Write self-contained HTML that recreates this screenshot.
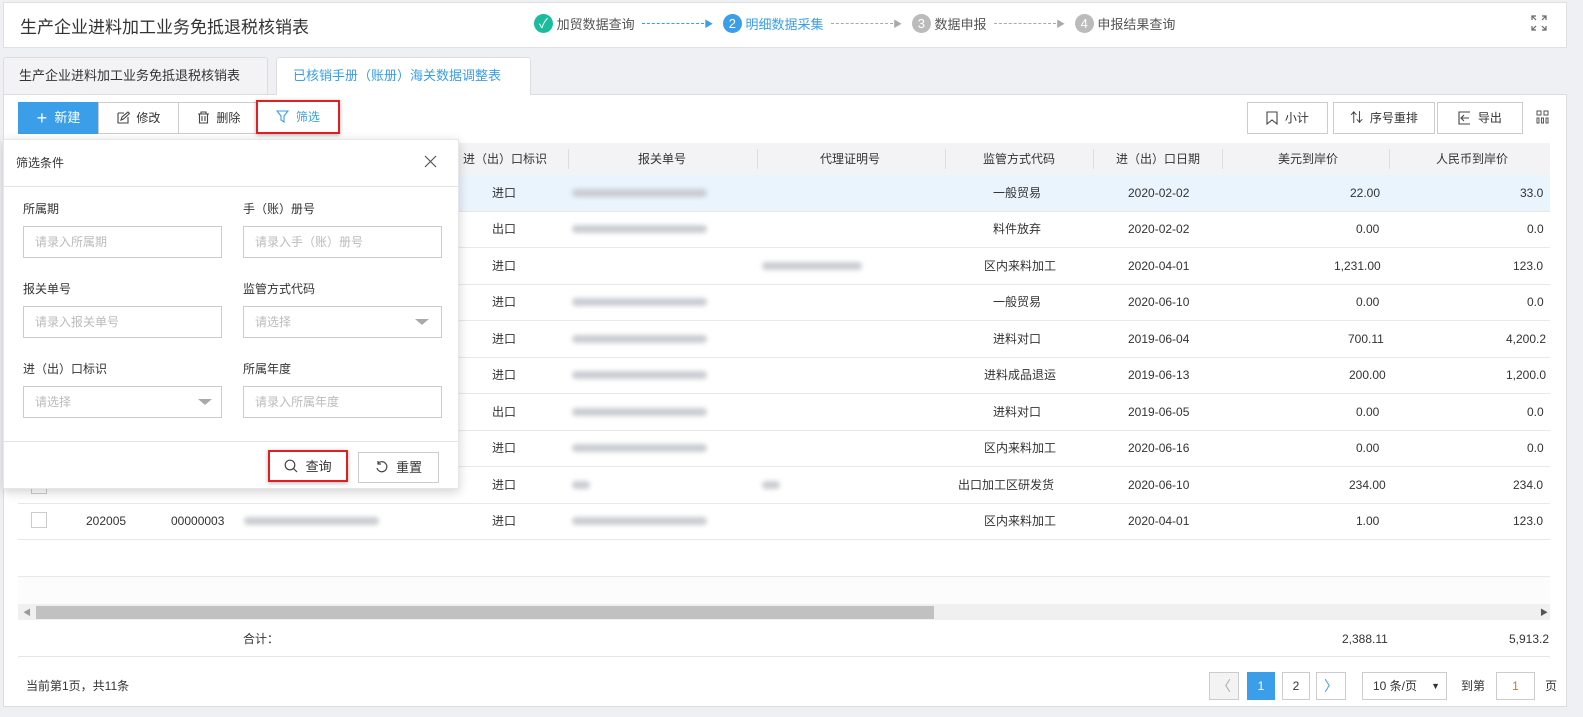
<!DOCTYPE html>
<html><head><meta charset="utf-8"><style>
*{box-sizing:border-box;margin:0;padding:0}
body{width:1583px;height:717px;background:#eef0f4;font-family:"Liberation Sans","Noto Sans CJK SC",sans-serif;font-size:12px;color:#333;position:relative;overflow:hidden}
.a{position:absolute}
.btn{position:absolute;border:1px solid #ccc;background:#fff;height:32px;line-height:30px;text-align:center;font-size:12px;color:#333}
.cell{position:absolute;white-space:nowrap;line-height:16px;height:16px}
.blur{position:absolute;height:8px;background:#c9ccd2;filter:blur(2.5px);border-radius:4px}
.row{position:absolute;left:18px;width:1532px;height:37px;border-bottom:1px solid #e8e8e8}
.inp{position:absolute;width:199px;height:32px;border:1px solid #ccc;color:#bbb;padding-left:11px;line-height:30px;font-size:12px;background:#fff}
.lbl{position:absolute;font-size:12px;color:#333}
.circ{display:inline-block;width:19px;height:19px;border-radius:50%;color:#fff;text-align:center;line-height:19px;font-size:13px;vertical-align:middle}
.tri{position:absolute;width:0;height:0;border-left:7px solid transparent;border-right:7px solid transparent;border-top:6px solid #aaa}
</style></head><body>
<div class="a" style="left:3px;top:2px;width:1564px;height:46px;background:#fff;border:1px solid #e0e0e0"></div>
<div class="a" style="left:20px;top:13px;font-size:17px;color:#333">生产企业进料加工业务免抵退税核销表</div>
<div class="a" style="left:534px;top:14px;font-size:13px;color:#555;white-space:nowrap">
<span class="circ" style="background:#1bbc9b">✓</span> <span style="vertical-align:middle">加贸数据查询</span>
<span style="display:inline-block;width:62px;border-top:1px dashed #3a9ee8;vertical-align:middle;margin-left:4px"></span><span style="color:#3a9ee8;font-size:9px;vertical-align:middle">▶</span>
<span class="circ" style="background:#3a9ee8;margin-left:6px">2</span> <span style="vertical-align:middle;color:#3a9ee8">明细数据采集</span>
<span style="display:inline-block;width:62px;border-top:1px dashed #aaa;vertical-align:middle;margin-left:4px"></span><span style="color:#aaa;font-size:9px;vertical-align:middle">▶</span>
<span class="circ" style="background:#bbb;margin-left:6px">3</span> <span style="vertical-align:middle">数据申报</span>
<span style="display:inline-block;width:62px;border-top:1px dashed #aaa;vertical-align:middle;margin-left:4px"></span><span style="color:#aaa;font-size:9px;vertical-align:middle">▶</span>
<span class="circ" style="background:#bbb;margin-left:6px">4</span> <span style="vertical-align:middle">申报结果查询</span>
</div>
<svg class="a" style="left:1531px;top:15px" width="16" height="16" viewBox="0 0 16 16" fill="none" stroke="#666" stroke-width="1.2"><path d="M1 5V1h4M1 1l4 4M15 5V1h-4M15 1l-4 4M1 11v4h4M1 15l4-4M15 11v4h-4M15 15l-4-4"/></svg>
<div class="a" style="left:3px;top:57px;width:265px;height:37px;background:#f3f3f5;border:1px solid #ddd;border-bottom:none;border-radius:3px 3px 0 0;line-height:36px;padding-left:15px;font-size:13px">生产企业进料加工业务免抵退税核销表</div>
<div class="a" style="left:276px;top:57px;width:255px;height:38px;background:#fff;border:1px solid #ddd;border-bottom:none;border-radius:3px 3px 0 0;line-height:36px;padding-left:16px;font-size:13px;color:#3a9ee8;z-index:2">已核销手册（账册）海关数据调整表</div>
<div class="a" style="left:3px;top:94px;width:1564px;height:613px;background:#fff;border:1px solid #ddd"></div>
<div class="btn" style="left:18px;top:102px;width:81px;background:#3a9ee8;border-color:#3a9ee8;color:#fff;font-size:13px"><span style="font-size:18px;vertical-align:-2px">+</span>&nbsp; 新建</div>
<div class="btn" style="left:98px;top:102px;width:81px"><svg width="13" height="13" viewBox="0 0 13 13" style="vertical-align:-2px" fill="none" stroke="#444" stroke-width="1.1"><path d="M1 2h6M1 2v10h10V6M4 9l1-3 6-5 1.5 1.5-6 5.5z"/></svg>&nbsp; 修改</div>
<div class="btn" style="left:178px;top:102px;width:81px"><svg width="13" height="13" viewBox="0 0 13 13" style="vertical-align:-2px" fill="none" stroke="#444" stroke-width="1.1"><path d="M1 3h11M4 3V1h5v2M2.5 3v9h8V3M5 5v5M8 5v5"/></svg>&nbsp; 删除</div>
<div class="btn" style="left:256px;top:100px;width:84px;height:34px;border:2px solid #e02020;color:#3a9ee8;line-height:30px;box-shadow:0 1px 4px rgba(0,0,0,.3)"><svg width="13" height="13" viewBox="0 0 13 13" style="vertical-align:-2px" fill="none" stroke="#3a9ee8" stroke-width="1.1"><path d="M1 1h11L8 6v6L5 10V6z"/></svg>&nbsp; 筛选</div>
<div class="btn" style="left:1247px;top:102px;width:81px"><svg width="12" height="14" viewBox="0 0 12 14" style="vertical-align:-3px" fill="none" stroke="#444" stroke-width="1.1"><path d="M1 1h10v12L6 9l-5 4z"/></svg>&nbsp; 小计</div>
<div class="btn" style="left:1333px;top:102px;width:102px"><span style="font-size:13px">⇅</span>&nbsp; 序号重排</div>
<div class="btn" style="left:1437px;top:102px;width:86px"><svg width="13" height="14" viewBox="0 0 13 14" style="vertical-align:-3px" fill="none" stroke="#444" stroke-width="1.1"><path d="M12 1H1v12h11M4 7h7M6 4L3 7l3 3"/></svg>&nbsp; 导出</div>
<svg class="a" style="left:1536px;top:110px" width="13" height="14" viewBox="0 0 13 14" fill="none" stroke="#555" stroke-width="1"><path d="M1 1h4v4H1zM8 1h4v4H8zM1 8h2v5H1zM5.5 8h2v5h-2zM10 8h2v5h-2z"/></svg>
<div class="a" style="left:18px;top:143px;width:1532px;height:33px;background:#f3f3f5;border-bottom:1px solid #e3e3e3"></div>
<div class="cell" style="left:463px;top:151px">进（出）口标识</div>
<div class="cell" style="left:638px;top:151px">报关单号</div>
<div class="cell" style="left:820px;top:151px">代理证明号</div>
<div class="cell" style="left:983px;top:151px">监管方式代码</div>
<div class="cell" style="left:1116px;top:151px">进（出）口日期</div>
<div class="cell" style="left:1278px;top:151px">美元到岸价</div>
<div class="cell" style="left:1436px;top:151px">人民币到岸价</div>
<div class="a" style="left:568px;top:149px;height:20px;border-left:1px solid #ddd"></div>
<div class="a" style="left:757px;top:149px;height:20px;border-left:1px solid #ddd"></div>
<div class="a" style="left:945px;top:149px;height:20px;border-left:1px solid #ddd"></div>
<div class="a" style="left:1093px;top:149px;height:20px;border-left:1px solid #ddd"></div>
<div class="a" style="left:1222px;top:149px;height:20px;border-left:1px solid #ddd"></div>
<div class="a" style="left:1389px;top:149px;height:20px;border-left:1px solid #ddd"></div>
<div class="row" style="top:175px;background:#eaf4fd"></div>
<div class="row" style="top:211px"></div><div class="row" style="top:248px"></div><div class="row" style="top:284px"></div><div class="row" style="top:321px"></div><div class="row" style="top:357px"></div><div class="row" style="top:394px"></div><div class="row" style="top:430px"></div><div class="row" style="top:467px"></div><div class="row" style="top:503px"></div><div class="row" style="top:540px"></div>
<div class="a" style="left:18px;top:577px;width:1532px;height:27px;background:#fcfcfc"></div>
<div class="cell" style="left:492px;top:185px">进口</div><div class="blur" style="left:572px;top:189px;width:135px"></div><div class="cell" style="left:993px;top:185px">一般贸易</div><div class="cell" style="left:1128px;top:185px">2020-02-02</div><div class="cell" style="left:1350px;top:185px">22.00</div><div class="cell" style="left:1520px;top:185px">33.0</div>
<div class="cell" style="left:492px;top:221px">出口</div><div class="blur" style="left:572px;top:225px;width:135px"></div><div class="cell" style="left:993px;top:221px">料件放弃</div><div class="cell" style="left:1128px;top:221px">2020-02-02</div><div class="cell" style="left:1356px;top:221px">0.00</div><div class="cell" style="left:1527px;top:221px">0.0</div>
<div class="cell" style="left:492px;top:258px">进口</div><div class="blur" style="left:762px;top:262px;width:100px"></div><div class="cell" style="left:984px;top:258px">区内来料加工</div><div class="cell" style="left:1128px;top:258px">2020-04-01</div><div class="cell" style="left:1334px;top:258px">1,231.00</div><div class="cell" style="left:1513px;top:258px">123.0</div>
<div class="cell" style="left:492px;top:294px">进口</div><div class="blur" style="left:572px;top:298px;width:135px"></div><div class="cell" style="left:993px;top:294px">一般贸易</div><div class="cell" style="left:1128px;top:294px">2020-06-10</div><div class="cell" style="left:1356px;top:294px">0.00</div><div class="cell" style="left:1527px;top:294px">0.0</div>
<div class="cell" style="left:492px;top:331px">进口</div><div class="blur" style="left:572px;top:335px;width:135px"></div><div class="cell" style="left:993px;top:331px">进料对口</div><div class="cell" style="left:1128px;top:331px">2019-06-04</div><div class="cell" style="left:1348px;top:331px">700.11</div><div class="cell" style="left:1506px;top:331px">4,200.2</div>
<div class="cell" style="left:492px;top:367px">进口</div><div class="blur" style="left:572px;top:371px;width:135px"></div><div class="cell" style="left:984px;top:367px">进料成品退运</div><div class="cell" style="left:1128px;top:367px">2019-06-13</div><div class="cell" style="left:1349px;top:367px">200.00</div><div class="cell" style="left:1506px;top:367px">1,200.0</div>
<div class="cell" style="left:492px;top:404px">出口</div><div class="blur" style="left:572px;top:408px;width:135px"></div><div class="cell" style="left:993px;top:404px">进料对口</div><div class="cell" style="left:1128px;top:404px">2019-06-05</div><div class="cell" style="left:1356px;top:404px">0.00</div><div class="cell" style="left:1527px;top:404px">0.0</div>
<div class="cell" style="left:492px;top:440px">进口</div><div class="blur" style="left:572px;top:444px;width:135px"></div><div class="cell" style="left:984px;top:440px">区内来料加工</div><div class="cell" style="left:1128px;top:440px">2020-06-16</div><div class="cell" style="left:1356px;top:440px">0.00</div><div class="cell" style="left:1527px;top:440px">0.0</div>
<div class="a" style="left:31px;top:478px;width:16px;height:16px;border:1px solid #ccc"></div><div class="cell" style="left:492px;top:477px">进口</div><div class="blur" style="left:572px;top:481px;width:18px"></div><div class="blur" style="left:762px;top:481px;width:18px"></div><div class="cell" style="left:958px;top:477px">出口加工区研发货</div><div class="cell" style="left:1128px;top:477px">2020-06-10</div><div class="cell" style="left:1349px;top:477px">234.00</div><div class="cell" style="left:1513px;top:477px">234.0</div>
<div class="a" style="left:31px;top:512px;width:16px;height:16px;border:1px solid #ccc"></div><div class="cell" style="left:86px;top:513px">202005</div><div class="cell" style="left:171px;top:513px">00000003</div><div class="blur" style="left:244px;top:517px;width:135px"></div><div class="cell" style="left:492px;top:513px">进口</div><div class="blur" style="left:572px;top:517px;width:135px"></div><div class="cell" style="left:984px;top:513px">区内来料加工</div><div class="cell" style="left:1128px;top:513px">2020-04-01</div><div class="cell" style="left:1356px;top:513px">1.00</div><div class="cell" style="left:1513px;top:513px">123.0</div>
<div class="a" style="left:18px;top:604px;width:1532px;height:16px;background:#f0f0f0"></div>
<div class="a" style="left:36px;top:606px;width:898px;height:13px;background:#c1c1c1"></div>
<div class="a" style="left:23px;top:607px;font-size:8px;color:#999">◀</div>
<div class="a" style="left:1540px;top:607px;font-size:8px;color:#555">▶</div>
<div class="cell" style="left:243px;top:631px">合计：</div>
<div class="cell" style="left:1342px;top:631px">2,388.11</div>
<div class="cell" style="left:1509px;top:631px">5,913.2</div>
<div class="a" style="left:18px;top:656px;width:1532px;border-top:1px solid #e6e6e6"></div>
<div class="cell" style="left:26px;top:678px">当前第1页，共11条</div>
<div class="a" style="left:1209px;top:672px;width:30px;height:28px;border:1px solid #ccc;background:#f3f3f3;color:#aaa;text-align:center;line-height:26px;font-size:14px">〈</div>
<div class="a" style="left:1247px;top:672px;width:28px;height:28px;background:#3a9ee8;color:#fff;text-align:center;line-height:28px">1</div>
<div class="a" style="left:1282px;top:672px;width:28px;height:28px;border:1px solid #ccc;text-align:center;line-height:26px">2</div>
<div class="a" style="left:1316px;top:672px;width:30px;height:28px;border:1px solid #ccc;color:#3a9ee8;text-align:center;line-height:26px;font-size:14px">〉</div>
<div class="a" style="left:1362px;top:672px;width:85px;height:28px;border:1px solid #ccc;line-height:26px;padding-left:10px">10 条/页<span style="position:absolute;right:6px;font-size:9px">▼</span></div>
<div class="cell" style="left:1461px;top:678px">到第</div>
<div class="a" style="left:1496px;top:672px;width:39px;height:28px;border:1px solid #ccc;text-align:center;line-height:26px;color:#c08020">1</div>
<div class="cell" style="left:1545px;top:678px">页</div>
<div class="a" style="left:3px;top:139px;width:456px;height:350px;background:#fff;box-shadow:0 3px 10px rgba(0,0,0,.18);border:1px solid #e6e6e6"></div>
<div class="lbl" style="left:16px;top:154px">筛选条件</div>
<svg class="a" style="left:424px;top:155px" width="13" height="13" viewBox="0 0 13 13" stroke="#555" stroke-width="1.2"><path d="M1 1l11 11M12 1L1 12"/></svg>
<div class="a" style="left:3px;top:186px;width:456px;border-top:1px solid #e3e3e3"></div>
<div class="lbl" style="left:23px;top:200px">所属期</div>
<div class="lbl" style="left:243px;top:200px">手（账）册号</div>
<div class="inp" style="left:23px;top:226px">请录入所属期</div>
<div class="inp" style="left:243px;top:226px">请录入手（账）册号</div>
<div class="lbl" style="left:23px;top:280px">报关单号</div>
<div class="lbl" style="left:243px;top:280px">监管方式代码</div>
<div class="inp" style="left:23px;top:306px">请录入报关单号</div>
<div class="inp" style="left:243px;top:306px">请选择</div><div class="tri" style="left:415px;top:319px"></div>
<div class="lbl" style="left:23px;top:360px">进（出）口标识</div>
<div class="lbl" style="left:243px;top:360px">所属年度</div>
<div class="inp" style="left:23px;top:386px">请选择</div><div class="tri" style="left:198px;top:399px"></div>
<div class="inp" style="left:243px;top:386px">请录入所属年度</div>
<div class="a" style="left:3px;top:441px;width:456px;border-top:1px solid #e3e3e3"></div>
<div class="btn" style="left:268px;top:450px;width:80px;border:2px solid #e02020;box-shadow:0 1px 4px rgba(0,0,0,.3);font-size:13px"><svg width="14" height="14" viewBox="0 0 14 14" style="vertical-align:-2px" fill="none" stroke="#444" stroke-width="1.2"><circle cx="6" cy="6" r="4.8"/><path d="M9.5 9.5L13 13"/></svg>&nbsp; 查询</div>
<div class="btn" style="left:358px;top:452px;width:81px;height:31px;font-size:13px"><svg width="14" height="14" viewBox="0 0 14 14" style="vertical-align:-2px" fill="none" stroke="#444" stroke-width="1.2"><path d="M3 3.5A5 5 0 1 1 2 8M3 1v3h3"/></svg>&nbsp; 重置</div>
</body></html>
